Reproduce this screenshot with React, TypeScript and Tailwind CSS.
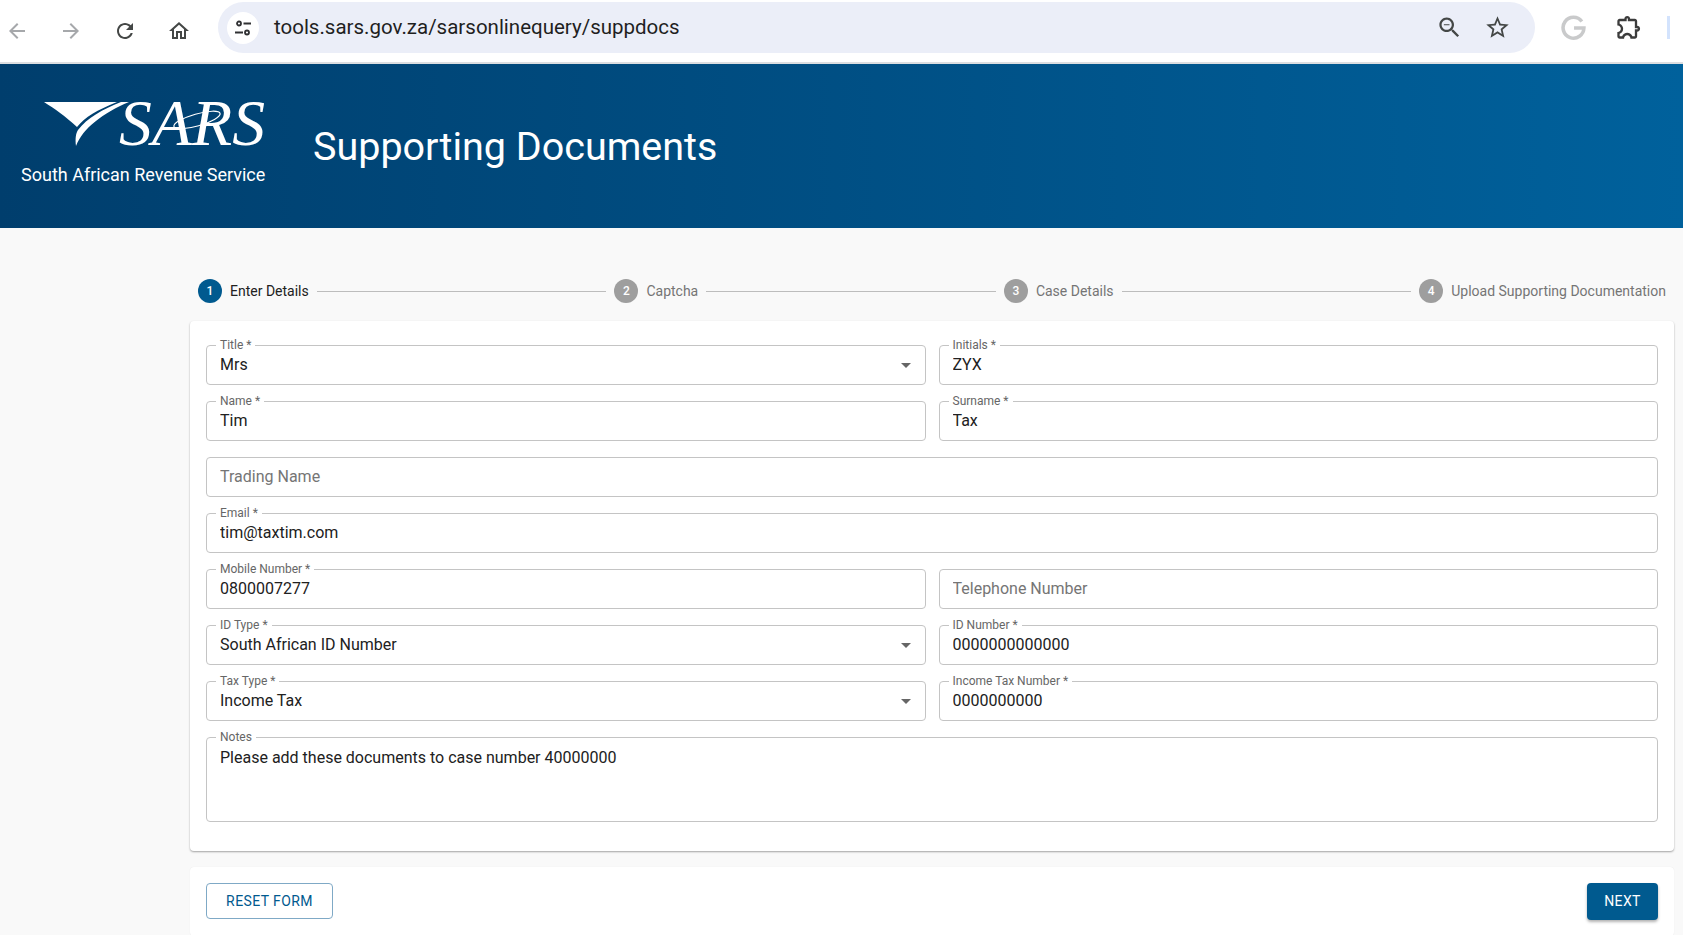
import React from 'react'

const Icon = ({ d, className }: { d: string; className?: string }) => (
  <svg viewBox="0 0 24 24" className={className} fill="currentColor">
    <path d={d} />
  </svg>
)

const icons = {
  back: 'M20 11H7.83l5.59-5.59L12 4l-8 8 8 8 1.41-1.41L7.83 13H20v-2z',
  forward: 'M12 4l-1.41 1.41L16.17 11H4v2h12.17l-5.58 5.59L12 20l8-8z',
  reload:
    'M17.65 6.35C16.2 4.9 14.21 4 12 4c-4.42 0-7.99 3.58-7.99 8s3.57 8 7.99 8c3.73 0 6.84-2.55 7.73-6h-2.08c-.82 2.33-3.04 4-5.65 4-3.31 0-6-2.69-6-6s2.69-6 6-6c1.66 0 3.14.69 4.22 1.78L13 11h7V4l-2.35 2.35z',
  home: 'M12 5.69l5 4.5V18h-2v-6H9v6H7v-7.81l5-4.5M12 3L2 12h3v8h6v-6h2v6h6v-8h3L12 3z',
  zoom: 'M15.5 14h-.79l-.28-.27C15.41 12.59 16 11.11 16 9.5 16 5.91 13.09 3 9.5 3S3 5.91 3 9.5 5.91 16 9.5 16c1.61 0 3.09-.59 4.23-1.57l.27.28v.79l5 4.99L20.49 19l-4.99-5zm-6 0C7.01 14 5 11.99 5 9.5S7.01 5 9.5 5 14 7.01 14 9.5 11.99 14 9.5 14zM7 9h5v1H7z',
  star: 'M22 9.24l-7.19-.62L12 2 9.19 8.63 2 9.24l5.46 4.73L5.82 21 12 17.27 18.18 21l-1.63-7.03L22 9.24zM12 15.4l-3.76 2.27 1-4.28-3.32-2.88 4.38-.38L12 6.1l1.71 4.04 4.38.38-3.32 2.88 1 4.28L12 15.4z',
  extension:
    'M10.5 4.5c.28 0 .5.22.5.5v2h6v6h2c.28 0 .5.22.5.5s-.22.5-.5.5h-2v6h-2.12c-.68-1.75-2.39-3-4.38-3s-3.7 1.25-4.38 3H4v-2.12c1.75-.68 3-2.39 3-4.38 0-1.99-1.24-3.7-2.99-4.38L4 7h6V5c0-.28.22-.5.5-.5m0-2C9.12 2.5 8 3.62 8 5H4c-1.1 0-1.99.9-1.99 2v3.8h.29c1.49 0 2.7 1.21 2.7 2.7s-1.21 2.7-2.7 2.7H2V20c0 1.1.9 2 2 2h3.8v-.3c0-1.49 1.21-2.7 2.7-2.7 1.49 0 2.7 1.21 2.7 2.7v.3H17c1.1 0 2-.9 2-2v-4c1.38 0 2.5-1.12 2.5-2.5S20.38 11 19 11V7c0-1.1-.9-2-2-2h-4c0-1.38-1.12-2.5-2.5-2.5z',
}

const BrowserBar = () => (
  <div className="flex h-[64px] items-start border-b-2 border-[#dcdee1] bg-white">
    <div className="flex h-[62px] w-[218px] items-center pl-[5px] text-[#444746]">
      <Icon d={icons.back} className="h-6 w-6 text-[#a6a8ab]" />
      <Icon d={icons.forward} className="ml-[30px] h-6 w-6 text-[#a6a8ab]" />
      <Icon d={icons.reload} className="ml-[30px] h-6 w-6" />
      <Icon d={icons.home} className="ml-[30px] h-6 w-6" />
    </div>
    <div className="mt-[2px] flex h-[51px] w-[1317px] items-center rounded-full bg-[#ebeef8] pl-[9px] pr-[24px]">
      <div className="flex h-[32px] w-[32px] items-center justify-center rounded-full bg-white">
        <svg viewBox="0 0 20 20" className="h-5 w-5" fill="none" stroke="#303133" strokeWidth="1.8">
          <circle cx="6" cy="5.5" r="2" />
          <path d="M10.5 5.5H18M2 14.5h8" />
          <circle cx="14" cy="14.5" r="2" />
        </svg>
      </div>
      <span className="ml-[15px] flex-1 font-['Roboto',sans-serif] text-[20.5px] text-[#1f1f1f]">
        tools.sars.gov.za/sarsonlinequery/suppdocs
      </span>
      <Icon d={icons.zoom} className="h-[27px] w-[27px] text-[#444746]" />
      <Icon d={icons.star} className="ml-[21px] h-[27px] w-[27px] text-[#444746]" />
    </div>
    <div className="flex h-[54px] flex-1 items-center pl-[26px]">
      <svg viewBox="0 0 24 24" className="h-[25px] w-[25px]" fill="none" stroke="#c9cacb" strokeWidth="3.4">
        <path d="M20 6.2A10 10 0 1 0 22 12.5H12.5" />
      </svg>
      <Icon d={icons.extension} className="ml-[29px] h-7 w-7 text-[#3c3c3c]" />
      <div className="ml-[24px] h-[23px] w-[3px] bg-[#d3e3fd]" />
    </div>
  </div>
)

const SarsLogo = () => (
  <svg viewBox="0 0 224 48" className="ml-[41px] h-[48px] w-[224px]">
    <path d="M3 2 L76 2 C56 10 44 17 36 27 C24 16 14 9 3 2Z" fill="white" />
    <path d="M88 2 C62 13 42 28 35 46 C34 38 35 33 37 30 C46 18 62 9 80 2Z" fill="white" />
    <text
      x="78"
      y="45"
      fill="white"
      fontSize="66"
      fontStyle="italic"
      fontFamily="'Liberation Serif', serif"
      textLength="146"
      lengthAdjust="spacingAndGlyphs"
    >
      SARS
    </text>
    <ellipse cx="156" cy="20" rx="24" ry="6" fill="none" stroke="white" strokeWidth="1.2" transform="rotate(-16 156 20)" />
  </svg>
)

const Header = () => (
  <header className="flex h-[164px] bg-gradient-to-r from-[#003e6d] to-[#00619c] text-white">
    <div className="w-[313px] pt-[36px]">
      <SarsLogo />
      <div className="ml-[21px] mt-[15px] text-[18px] leading-[24px]">South African Revenue Service</div>
    </div>
    <h1 className="mt-[60px] text-[39.5px] leading-[46px]">Supporting Documents</h1>
  </header>
)

const steps = ['Enter Details', 'Captcha', 'Case Details', 'Upload Supporting Documentation']

const Stepper = () => (
  <div className="mb-[18px] flex h-6 items-center gap-2 pl-[8px] pr-[8px]">
    {steps.map((label, i) => (
      <React.Fragment key={label}>
        {i > 0 && <div className="h-px flex-1 bg-[#bdbdbd]" />}
        <div
          className={`flex h-6 w-6 items-center justify-center rounded-full text-[12px] font-medium text-white ${
            i === 0 ? 'bg-[#005a8f]' : 'bg-[#9e9e9e]'
          }`}
        >
          {i + 1}
        </div>
        <span className={`text-[14px] ${i === 0 ? 'text-[#212121]' : 'text-[#757575]'}`}>{label}</span>
      </React.Fragment>
    ))}
  </div>
)

const Field = ({
  label,
  value,
  select,
  wide,
}: {
  label: string
  value?: string
  select?: boolean
  wide?: boolean
}) => (
  <div
    className={`relative flex h-[40px] items-center rounded border border-[#c4c4c4] px-[13px] ${
      wide ? 'col-span-2' : ''
    }`}
  >
    {value !== undefined && (
      <label className="absolute -top-[9px] left-[9px] bg-white px-1 text-[12px] leading-[16px] text-[#666]">
        {label}
      </label>
    )}
    <input
      readOnly
      value={value ?? ''}
      placeholder={value === undefined ? label : ''}
      className="min-w-0 flex-1 bg-transparent text-[16px] text-[#212121] outline-none placeholder:text-[#757575] placeholder:opacity-100"
    />
    {select && (
      <svg viewBox="0 0 10 5" className="mr-[1px] h-[5px] w-[10px]" fill="#666">
        <path d="M0 0l5 5 5-5z" />
      </svg>
    )}
  </div>
)

export default function App() {
  return (
    <div className="h-[935px] overflow-hidden bg-[#f9f9f9] font-['Roboto',sans-serif]">
      <BrowserBar />
      <Header />
      <main className="ml-[190px] mr-[9px] pt-[51px]">
        <Stepper />
        <section className="rounded bg-white px-4 pb-[29px] pt-6 shadow-[0_1px_2px_rgba(0,0,0,0.35)]">
          <div className="grid grid-cols-2 gap-x-[13px] gap-y-4">
            <Field label="Title *" value="Mrs" select />
            <Field label="Initials *" value="ZYX" />
            <Field label="Name *" value="Tim" />
            <Field label="Surname *" value="Tax" />
            <Field label="Trading Name" wide />
            <Field label="Email *" value="tim@taxtim.com" wide />
            <Field label="Mobile Number *" value="0800007277" />
            <Field label="Telephone Number" />
            <Field label="ID Type *" value="South African ID Number" select />
            <Field label="ID Number *" value="0000000000000" />
            <Field label="Tax Type *" value="Income Tax" select />
            <Field label="Income Tax Number *" value="0000000000" />
            <div className="relative col-span-2 h-[85px] rounded border border-[#c4c4c4] px-[13px] pt-[9px]">
              <label className="absolute -top-[9px] left-[9px] bg-white px-1 text-[12px] leading-[16px] text-[#666]">
                Notes
              </label>
              <textarea
                readOnly
                value="Please add these documents to case number 40000000"
                className="h-full w-full resize-none bg-transparent text-[16px] leading-[21px] text-[#212121] outline-none"
              />
            </div>
          </div>
        </section>
        <section className="mt-4 flex justify-between rounded bg-white p-4 shadow-[0_0_1px_rgba(0,0,0,0.1)]">
          <button className="h-[36px] w-[127px] rounded border border-[#7fa9c6] text-[14px] tracking-[0.4px] text-[#005a8f]">
            RESET FORM
          </button>
          <button className="h-[37px] w-[71px] rounded bg-[#005a8f] text-[14px] tracking-[0.4px] text-white shadow-[0_2px_3px_rgba(0,0,0,0.3)]">
            NEXT
          </button>
        </section>
      </main>
    </div>
  )
}
